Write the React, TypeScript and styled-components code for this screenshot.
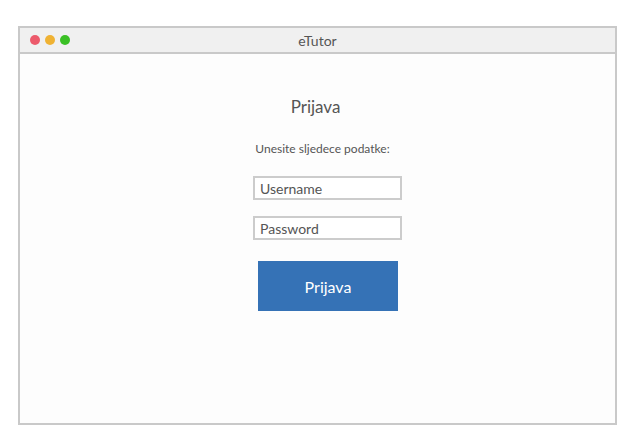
import React from "react";
import styled, { createGlobalStyle } from "styled-components";

const Global = createGlobalStyle`
  html, body { margin: 0; padding: 0; background: #fff; }
  body { font-family: Lato, "Open Sans", sans-serif; }
`;

const Page = styled.div`
  padding: 26px 12px 16px 18px;
`;

const Window = styled.div`
  width: 599px;
  height: 399px;
  box-sizing: border-box;
  border: 2px solid #c9c9c9;
  display: flex;
  flex-direction: column;
  background: #fdfdfd;
`;

const TitleBar = styled.div`
  height: 24px;
  flex: none;
  background: #f0f0f0;
  border-bottom: 2px solid #c9c9c9;
  position: relative;
  display: flex;
  align-items: center;
  justify-content: center;
`;

const Dots = styled.div`
  position: absolute;
  left: 10px;
  top: 7px;
  display: flex;
  gap: 5px;
`;

const Dot = styled.span<{ $c: string }>`
  width: 10px;
  height: 10px;
  border-radius: 50%;
  background: ${(p) => p.$c};
`;

const Title = styled.div`
  font-size: 14px;
  color: #555;
  padding-top: 1px;
`;

const Body = styled.div`
  flex: 1;
  display: flex;
  flex-direction: column;
  align-items: center;
  padding-top: 42px;
`;

const Heading = styled.div`
  font-size: 17px;
  color: #555;
  line-height: 22px;
  margin-left: -4px;
`;

const Sub = styled.div`
  font-size: 12px;
  color: #555;
  margin-top: 23px;
  line-height: 15px;
  margin-left: 10px;
`;

const Input = styled.div<{ $mt: number }>`
  width: 149px;
  height: 24px;
  box-sizing: border-box;
  border: 2px solid #cccccc;
  background: #fff;
  font-size: 14px;
  color: #555;
  padding: 2px 0 0 5px;
  line-height: 18px;
  margin-top: ${(p) => p.$mt}px;
  margin-left: 20px;
`;

const Button = styled.div`
  width: 140px;
  height: 50px;
  margin-top: 21px;
  margin-left: 21px;
  background: #3572b6;
  color: #fff;
  font-size: 16px;
  display: flex;
  align-items: center;
  justify-content: center;
`;

export default function App() {
  return (
    <>
      <Global />
      <Page>
        <Window>
          <TitleBar>
            <Dots>
              <Dot $c="#ec5a6b" />
              <Dot $c="#efb233" />
              <Dot $c="#3ac025" />
            </Dots>
            <Title>eTutor</Title>
          </TitleBar>
          <Body>
            <Heading>Prijava</Heading>
            <Sub>Unesite sljedece podatke:</Sub>
            <Input $mt={20}>Username</Input>
            <Input $mt={16}>Password</Input>
            <Button>Prijava</Button>
          </Body>
        </Window>
      </Page>
    </>
  );
}
